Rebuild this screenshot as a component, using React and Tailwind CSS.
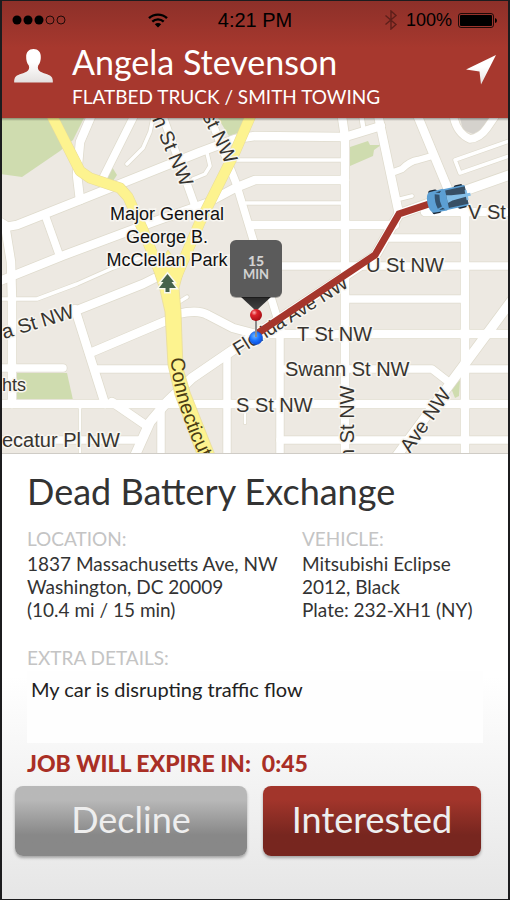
// ------------------------------
// Map data
// ------------------------------

const ROADS = [
  { w: 9, d: 'M0 228L17 225L80 200L200 152L235 139L255 136L345 137L381 126' },
  { w: 9, d: 'M0 281L62 256L153 222L207 203L235 188L255 180H345' },
  { w: 9, d: 'M0 222L5 225L11 262L12 300V404' },
  { w: 8, d: 'M45 215L60 257' },
  { w: 9, d: 'M92 114L80 142L77 175L80 200' },
  { w: 8, d: 'M135 114L102 180' },
  { w: 4, d: 'M153 118L150 132L143 148L127 164' },
  { w: 8, d: 'M162 114L195 206' },
  { w: 8, d: 'M208 112L236 183L252 236L281 330' },
  { w: 4, d: 'M207 153L210 166L205 174L193 179' },
  { w: 4, d: 'M0 299H37L77 284L113 268L150 254' },
  { w: 9, d: 'M75 311L143 284L163 274' },
  { w: 9, d: 'M75 309L105 404' },
  { w: 9, d: 'M90 353L168 320' },
  { w: 9, d: 'M178 314Q198 309 208 315L233 328L255 334H512' },
  { w: 8, d: 'M0 368H63' },
  { w: 8, d: 'M95 369H176' },
  { w: 9, d: 'M0 404H512' },
  { w: 10, d: 'M133 460L150 422L167 402L192 378L230 352L258 333L375 256L399 214L512 174' },
  { w: 9, d: 'M112 402L147 426' },
  { w: 8, d: 'M0 440H142' },
  { w: 8, d: 'M161 407V460' },
  { w: 8, d: 'M227 356V460' },
  { w: 3, d: 'M80 408V460' },
  { w: 3, d: 'M245 408V423' },
  { w: 4, d: 'M179 302L187 297' },
  { w: 4, d: 'M236 160H345' },
  { w: 4, d: 'M246 203H345' },
  { w: 9, d: 'M252 225H395' },
  { w: 8, d: 'M390 238H465' },
  { w: 8, d: 'M262 266H512' },
  { w: 9, d: 'M341 110L345 137V460' },
  { w: 5, d: 'M361 114L364 132' },
  { w: 9, d: 'M377 110L399 214' },
  { w: 9, d: 'M416 112L450 194' },
  { w: 7, d: 'M394 172L402 169Q410 161 418 160L432 156' },
  { w: 4, d: 'M400 199L412 196' },
  { w: 8, d: 'M453 114Q456 133 470 139Q480 138 487 128L498 112' },
  { w: 4, d: 'M512 140L455 160L460 173L512 155' },
  { w: 9, d: 'M425 212H512' },
  { w: 9, d: 'M465 212V460' },
  { w: 8, d: 'M345 299H465' },
  { w: 8, d: 'M285 369H432L450 383' },
  { w: 8, d: 'M465 369H512' },
  { w: 10, d: 'M512 300L396 457' },
  { w: 8, d: 'M280 440H512' },
  { w: 8, d: 'M280 330V460' },
]

const PARKS = [
  'M0 118H84L73 140L60 151L22 177L0 174Z',
  'M218 118H246L238 133L229 136Z',
  'M112 167L117 175L113 181L102 183Z',
  'M350 147L368 141L370 145H381L374 150L373 156L350 166Z',
  'M17 373H67L73 400H17Z',
  'M451 388L460 380L459 396L455 398Z',
]

const AVENUES = [
  { w: 10, d: 'M50 112L80 171L90 178L120 188L128 197L143 230L163 280' },
  { w: 10, d: 'M254 108L235 152L200 222L175 280' },
]

const STREETS = [
  { x: 297, y: 341, text: 'T St NW' },
  { x: 366, y: 272, text: 'U St NW' },
  { x: 468, y: 219, text: 'V St' },
  { x: 285, y: 376, text: 'Swann St NW' },
  { x: 236, y: 412, text: 'S St NW' },
  { x: 2, y: 447, text: 'ecatur Pl NW' },
]

const ANGLED = [
  { place: 'translate(4 339) rotate(-17)', text: 'a St NW' },
  { place: 'translate(152 119) rotate(67)', text: 'n St NW' },
  { place: 'translate(202 116) rotate(64)', text: 'st NW' },
  { place: 'translate(354 460) rotate(-90)', text: 'n St NW' },
  { place: 'translate(410 454) rotate(-55)', text: 'Ave NW' },
]

// ------------------------------
// Status bar
// ------------------------------

function StatusBar() {
  return (
    <div className="flex items-center px-[10px] h-[38px] font-['Liberation_Sans',Arial,sans-serif] text-xl text-black">
      <div className="flex-1 flex items-center justify-between">
        <svg width="54" height="10" viewBox="0 0 54 10" aria-hidden="true">
          <circle cx="5" cy="5" r="4.5" />
          <circle cx="16" cy="5" r="4.5" />
          <circle cx="27" cy="5" r="4.5" />
          <circle cx="38" cy="5" r="4" fill="none" stroke="#000" strokeWidth="0.8" />
          <circle cx="49" cy="5" r="4" fill="none" stroke="#000" strokeWidth="0.8" />
        </svg>
        <svg className="mr-[50px]" width="20" height="15" viewBox="0 0 20 15" aria-hidden="true">
          <path d="M1 5.2A13 13 0 0 1 19 5.2" fill="none" stroke="#000" strokeWidth="2.4" />
          <path d="M4.3 8.7A8.2 8.2 0 0 1 15.7 8.7" fill="none" stroke="#000" strokeWidth="2.3" />
          <path d="M6.8 11.2A4.6 4.6 0 0 1 13.2 11.2L10 14.5Z" />
        </svg>
      </div>
      <span className="whitespace-nowrap">4:21 PM</span>
      <div className="flex-1 flex items-center justify-end">
        <svg width="14" height="20" viewBox="0 0 14 20" fill="none" stroke="#5e1f1a" strokeWidth="1.4" aria-hidden="true">
          <path d="M1.5 5.5L12 14.5L7 19V1L12 5.5L1.5 14.5" />
        </svg>
        <span className="ml-2 text-lg">100%</span>
        <svg className="ml-[6px]" width="40" height="15" viewBox="0 0 40 15" aria-hidden="true">
          <rect x="0.5" y="0.5" width="35" height="14" rx="2.5" fill="none" stroke="#000" strokeWidth="0.8" />
          <rect x="2" y="2" width="32" height="11" rx="1" />
          <path d="M37 5Q39 5.5 39 7.5T37 10Z" />
        </svg>
      </div>
    </div>
  )
}

// ------------------------------
// Driver header
// ------------------------------

function DriverHeader() {
  return (
    <div className="flex items-start px-3 pb-[10px] text-white">
      <svg className="mt-[10px] shrink-0" width="39" height="34" viewBox="0 0 39 34" aria-hidden="true">
        <defs>
          <linearGradient id="person" x1="0" y1="0" x2="0" y2="1">
            <stop offset="0.4" stopColor="#fff" />
            <stop offset="1" stopColor="#e4e0df" />
          </linearGradient>
        </defs>
        <path
          d="M19.500 0C24 0 27 3 26.800 8C27 10.500 26 14.500 24.200 16.500C23.300 19 24 21.500 26.500 22.800C31 25 36 25.500 38 28.500C38.700 30 39 32 38.800 33.500H0.200C0 32 0.300 30 1 28.500C3 25.500 8 25 12.500 22.800C15 21.500 15.700 19 14.800 16.500C13 14.500 12 10.500 12.200 8C12 3 15 0 19.500 0Z"
          fill="url(#person)"
        />
      </svg>
      <div className="flex-1 ml-[19px] whitespace-nowrap">
        <h1 className="text-[34px] leading-[46px]">Angela Stevenson</h1>
        <p className="text-[19px] leading-[23px]">FLATBED TRUCK / SMITH TOWING</p>
      </div>
      <button type="button" aria-label="Navigate" className="mt-4 shrink-0">
        <svg width="30" height="30" viewBox="0 0 30 30" aria-hidden="true">
          <path d="M30 0L15 29.500L13.500 16.500L0 14.500Z" fill="url(#person)" />
        </svg>
      </button>
    </div>
  )
}

// ------------------------------
// Map
// ------------------------------

function TowTruck() {
  return (
    <g transform="translate(448 199) rotate(-12)">
      <g fill="#1d2a38">
        <rect x="-18" y="-12" width="9" height="24" rx="2" />
        <rect x="8" y="-12" width="9" height="24" rx="2" />
      </g>
      <path d="M-17 -10.500Q-21 -9 -21 0Q-21 9 -17 10.500L-3 11V-11Z" fill="#5c9fd3" />
      <rect x="-4" y="-10.500" width="23" height="21" rx="1" fill="#5c9fd3" />
      <rect x="-1" y="-9" width="20" height="18" fill="#374f65" />
      <path d="M-12 -7.500Q-14 0 -12 7.500L-7.500 6Q-9 0 -7.500 -6Z" fill="#33536f" />
      <path d="M-11 -9L-5 -9.500L-7 -7.500ZM-11 9L-5 9.500L-7 7.500Z" fill="#2c4357" />
      <path d="M-1 -4L4 -3L18 -1.500V-5H20V-1.500H23V1.500H20V5H18V1.500L4 2.500L-1 4Z" fill="#84bfe8" />
    </g>
  )
}

function RouteMap() {
  return (
    <svg
      className="block w-full font-['Liberation_Sans',Arial,sans-serif]"
      viewBox="2 118 506 336"
      role="img"
      aria-label="Route map"
    >
      <defs>
        <linearGradient id="edge" x1="0" y1="0" x2="0" y2="1">
          <stop offset="0" stopColor="#000" stopOpacity="0.35" />
          <stop offset="1" stopColor="#000" stopOpacity="0" />
        </linearGradient>
        <linearGradient id="tip" x1="0" y1="0" x2="0" y2="1">
          <stop offset="0" stopColor="#262626" />
          <stop offset="1" stopColor="#444" />
        </linearGradient>
        <radialGradient id="red" cx="0.35" cy="0.3" r="0.7">
          <stop offset="0" stopColor="#ffb0b0" />
          <stop offset="0.35" stopColor="#dd2229" />
          <stop offset="1" stopColor="#a80f16" />
        </radialGradient>
        <radialGradient id="blue" cx="0.4" cy="0.35" r="0.7">
          <stop offset="0" stopColor="#6cb4ff" />
          <stop offset="0.5" stopColor="#1b74ff" />
          <stop offset="1" stopColor="#0a49d8" />
        </radialGradient>
        <path id="connecticut" d="M171 358C172 385 180 409 188 430C192 441 199 454 210 478" />
      </defs>

      <rect x="0" y="116" width="512" height="340" fill="#ede9e2" />
      {PARKS.map((d) => (
        <path key={d} d={d} fill="#cfdcaf" />
      ))}
      <path d="M460 118H490L484 128L473 134L463 130Z" fill="#d5d2cd" />

      {/* Streets: casing first, then the white surface */}
      <g fill="none" stroke="#dfdbcd" strokeLinejoin="round" strokeLinecap="round">
        {ROADS.map((r) => (
          <path key={r.d} d={r.d} strokeWidth={r.w + 1} />
        ))}
      </g>
      <g fill="none" stroke="#fff" strokeLinejoin="round" strokeLinecap="round">
        {ROADS.map((r) => (
          <path key={r.d} d={r.d} strokeWidth={r.w - 0.5} />
        ))}
      </g>

      {/* Avenues */}
      <g fill="none" stroke="#e8dc9a" strokeLinejoin="round">
        {AVENUES.map((r) => (
          <path key={r.d} d={r.d} strokeWidth={r.w + 1} />
        ))}
      </g>
      <path
        d="M152 265L163 257L168 250L174 259L186 262L179 288L181 312L183 368L190 392L217 460H199L175 395L168 365L165 312L160 290Z"
        fill="#fdf38f"
        stroke="#e8dc9a"
        strokeWidth="0.8"
      />
      <g fill="none" stroke="#fdf38f" strokeLinejoin="round">
        {AVENUES.map((r) => (
          <path key={r.d} d={r.d} strokeWidth={r.w} />
        ))}
      </g>

      {/* Park tree */}
      <path
        d="M167.500 274L174 282H171.500L176 288H169.500V292H165.500V288H159L163.500 282H161Z"
        fill="#46624b"
        stroke="#f8f8ee"
        strokeWidth="3"
        paintOrder="stroke"
      />

      {/* Labels */}
      <g fill="#37342f" stroke="#f8f6f1" strokeWidth="3" strokeLinejoin="round" paintOrder="stroke" fontSize="20">
        {STREETS.map((s) => (
          <text key={s.text} x={s.x} y={s.y}>{s.text}</text>
        ))}
        {ANGLED.map((s) => (
          <text key={s.place} transform={s.place}>{s.text}</text>
        ))}
        <text transform="translate(238 356) rotate(-32)" fontSize="19">Florida Ave NW</text>
        <text x="2" y="391" fontSize="18">hts</text>
      </g>
      <text fill="#4a3c14" fontSize="20">
        <textPath href="#connecticut">Connecticut</textPath>
      </text>
      <g fill="#111" stroke="#f8f6f1" strokeWidth="3" paintOrder="stroke" fontSize="18" textAnchor="middle">
        <text x="167" y="220">Major General</text>
        <text x="167" y="243">George B.</text>
        <text x="167" y="266">McClellan Park</text>
      </g>

      {/* Route */}
      <path d="M258 333L375 255L399 214L432 203" fill="none" stroke="#a5362c" strokeWidth="7" />
      <TowTruck />

      {/* Arrival pin */}
      <circle cx="256" cy="338" r="6.500" fill="url(#blue)" stroke="#1750c8" strokeWidth="0.6" />
      <path d="M256 318V337" stroke="#8b8b8b" strokeWidth="2" />
      <path d="M240 296H272L256 311Z" fill="url(#tip)" />
      <rect x="230" y="241" width="52" height="57" rx="6" fill="#000" opacity="0.3" />
      <rect x="230" y="240" width="52" height="57" rx="6" fill="#5b5b5b" />
      <g textAnchor="middle" fill="#d2d2d2" className="font-['Lato',sans-serif]">
        <text x="256" y="266" fontSize="14" fontWeight="900">15</text>
        <text x="256" y="279" fontSize="13" fontWeight="700">MIN</text>
      </g>
      <circle cx="256" cy="315" r="6" fill="url(#red)" />

      <rect x="0" y="118" width="512" height="3" fill="url(#edge)" />
      <path d="M0 453.500H512" stroke="#cfccc6" />
    </svg>
  )
}

// ------------------------------
// Job details
// ------------------------------

function Label({ children }) {
  return <h3 className="text-[19px] leading-[26px] text-[#c4c4c4]">{children}</h3>
}

function JobDetails() {
  return (
    <section className="flex-1 flex flex-col px-[13px] pt-[15px] pb-[42px] bg-linear-to-b from-white from-50% to-[#e6e6e6] text-[#333]">
      <div className="px-3">
        <h2 className="text-[36px] leading-[44px] whitespace-nowrap">Dead Battery Exchange</h2>
        <div className="mt-[13px] grid grid-cols-[275fr_181fr] text-[19px] leading-[23px] whitespace-nowrap">
          <div>
            <Label>LOCATION:</Label>
            <p>1837 Massachusetts Ave, NW</p>
            <p>Washington, DC 20009</p>
            <p>(10.4 mi / 15 min)</p>
          </div>
          <div>
            <Label>VEHICLE:</Label>
            <p>Mitsubishi Eclipse</p>
            <p>2012, Black</p>
            <p>Plate: 232-XH1 (NY)</p>
          </div>
        </div>
        <div className="mt-6">
          <Label>EXTRA DETAILS:</Label>
        </div>
        <p className="min-h-[72px] px-1 pt-[5px] bg-[#fefefe] text-[20px] leading-[26px] text-[#222]">
          My car is disrupting traffic flow
        </p>
        <p className="mt-[7px] text-[23px] leading-[26px] font-black text-[#a92f25]">
          JOB WILL EXPIRE IN:&nbsp; 0:45
        </p>
      </div>
      <div className="mt-[10px] mr-[14px] grid grid-cols-[232fr_218fr] gap-4 text-[36px] leading-[44px] text-[#eee]">
        <button
          type="button"
          className="h-[70px] rounded-lg pb-1 bg-linear-to-b from-[#b8b8b8] from-20% to-[#888] to-70% shadow-[0_2px_3px_rgba(0,0,0,0.3)]"
        >
          Decline
        </button>
        <button
          type="button"
          className="h-[70px] rounded-lg pb-1 bg-linear-to-b from-[#a2352b] from-20% to-[#77261f] to-70% shadow-[0_2px_3px_rgba(0,0,0,0.3)]"
        >
          Interested
        </button>
      </div>
    </section>
  )
}

// ------------------------------
// App
// ------------------------------

export default function App() {
  return (
    <main className="min-h-screen flex flex-col border-x-2 border-y border-[#1c1c1e] font-['Lato',sans-serif]">
      <header className="bg-linear-to-b from-[#8d3029] to-[#a7382e] to-40%">
        <StatusBar />
        <DriverHeader />
      </header>
      <RouteMap />
      <JobDetails />
    </main>
  )
}
